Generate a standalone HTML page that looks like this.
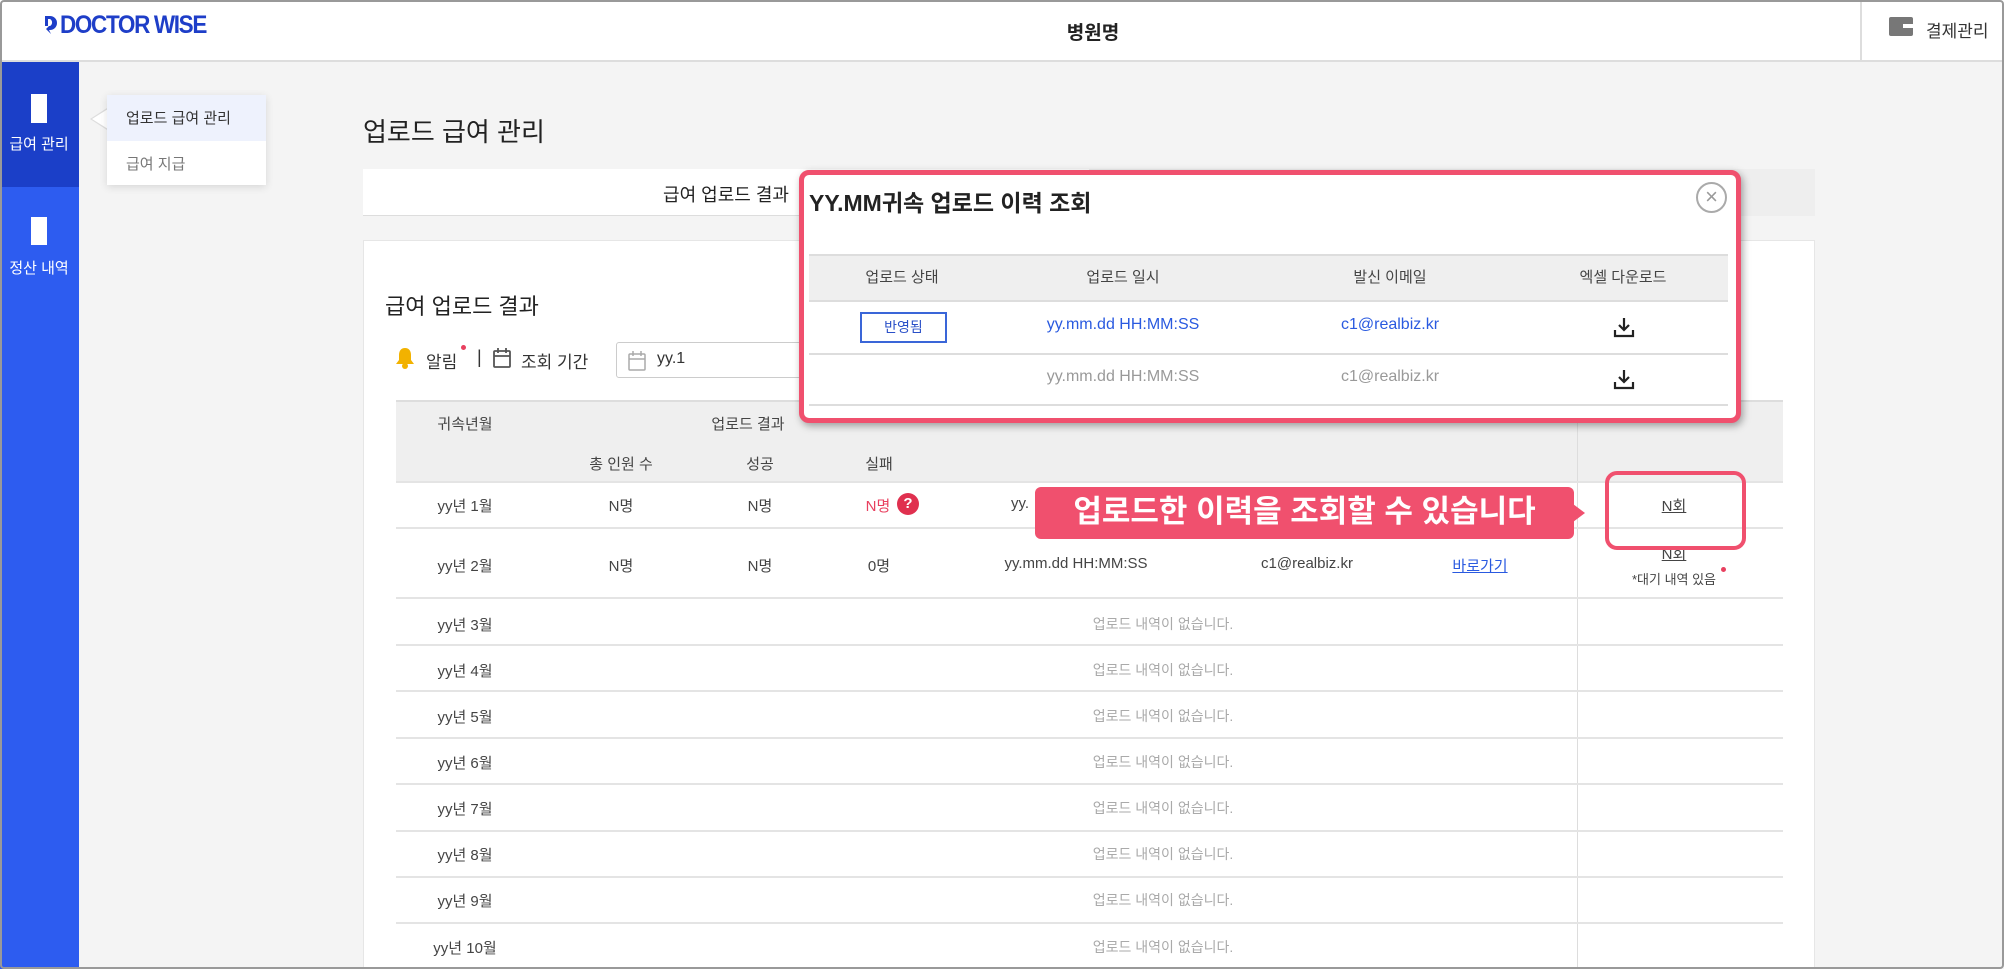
<!DOCTYPE html>
<html><head><meta charset="utf-8"><style>
*{margin:0;padding:0;box-sizing:border-box}
body{width:2004px;height:969px;overflow:hidden;background:#f4f4f4;font-family:"Liberation Sans","Noto Sans CJK KR",sans-serif;color:#333;position:relative}
.a{position:absolute}
.c{position:absolute;transform:translateX(-50%);white-space:nowrap}
.t{font-size:15px;color:#444}
.g{color:#aaa}
.hl{position:absolute;left:396px;width:1387px;height:2px;background:#e4e4e4}
</style></head><body>
<div class="a" style="left:0;top:0;width:2004px;height:969px;border:2px solid #999;border-radius:4px;z-index:50;pointer-events:none"></div>
<!-- header -->
<div class="a" style="left:0;top:0;width:2004px;height:62px;background:#fff;border-bottom:2px solid #ddd"></div>
<svg class="a" style="left:43px;top:14px" width="16" height="22" viewBox="0 0 16 22"><path d="M2 2h5a7 7 0 0 1 0 14h-1l2 4-5-5 3-3h1a4 4 0 0 0 0-7H5v7H2z" fill="#1e3ec8"/></svg>
<div class="a" style="left:60px;top:11px;font-size:25px;font-weight:bold;color:#1e3ec8;letter-spacing:-1.5px;transform:scaleX(.9);transform-origin:left">DOCTOR WISE</div>
<div class="c" style="left:1093px;top:18px;font-size:19px;font-weight:bold;color:#222">병원명</div>
<div class="a" style="left:1860px;top:0;width:2px;height:62px;background:#ddd"></div>
<div class="a" style="left:1889px;top:17px;width:24px;height:19px;background:#777;border-radius:2px"></div>
<div class="a" style="left:1903px;top:24px;width:10px;height:4px;background:#fff"></div>
<div class="a" style="left:1926px;top:17px;font-size:17px;color:#333">결제관리</div>
<!-- sidebar -->
<div class="a" style="left:0;top:62px;width:79px;height:907px;background:#2d5cf0"></div>
<div class="a" style="left:0;top:62px;width:79px;height:125px;background:#1b3fc8"></div>
<div class="a" style="left:31px;top:94px;width:16px;height:29px;background:#fff"></div>
<div class="c" style="left:39px;top:133px;font-size:15px;color:#fff">급여 관리</div>
<div class="a" style="left:31px;top:217px;width:16px;height:28px;background:#fff"></div>
<div class="c" style="left:39px;top:257px;font-size:15px;color:#fff">정산 내역</div>
<!-- submenu -->
<div class="a" style="left:90px;top:108px;width:0;height:0;border-top:11px solid transparent;border-bottom:11px solid transparent;border-right:17px solid #ddd"></div>
<div class="a" style="left:92px;top:109px;width:0;height:0;border-top:10px solid transparent;border-bottom:10px solid transparent;border-right:16px solid #fff"></div>
<div class="a" style="left:107px;top:95px;width:159px;height:90px;background:#fff;box-shadow:0 2px 8px rgba(0,0,0,.12)"></div>
<div class="a" style="left:107px;top:95px;width:159px;height:46px;background:#eef2fd"></div>
<div class="a" style="left:126px;top:107px;font-size:15px;color:#333">업로드 급여 관리</div>
<div class="a" style="left:126px;top:153px;font-size:15px;color:#777">급여 지급</div>
<!-- main -->
<div class="a" style="left:363px;top:112px;font-size:26px;color:#222">업로드 급여 관리</div>
<div class="a" style="left:363px;top:169px;width:1452px;height:47px;background:#fff;border-bottom:1px solid #ddd"></div>
<div class="a" style="left:1089px;top:169px;width:726px;height:47px;background:#eee"></div>
<div class="c" style="left:726px;top:181px;font-size:18px;color:#222">급여 업로드 결과</div>
<div class="a" style="left:363px;top:240px;width:1452px;height:729px;background:#fff;border:1px solid #e6e6e6"></div>
<div class="a" style="left:385px;top:289px;font-size:22px;color:#222">급여 업로드 결과</div>
<svg class="a" style="left:395px;top:347px" width="20" height="22" viewBox="0 0 20 22"><path d="M10 1c-4 0-6 3-6 7v5l-3 4h18l-3-4V8c0-4-2-7-6-7z" fill="#f2b200"/><circle cx="10" cy="19" r="3" fill="#f2b200"/></svg>
<div class="a" style="left:426px;top:348px;font-size:17px;color:#333">알림</div>
<div class="a" style="left:461px;top:345px;width:5px;height:5px;background:#e8405f;border-radius:50%"></div>
<div class="a" style="left:477px;top:347px;font-size:18px;color:#333">|</div>
<svg class="a" style="left:492px;top:347px" width="20" height="22" viewBox="0 0 20 22" fill="none" stroke="#555" stroke-width="1.8"><rect x="2" y="4" width="16" height="16" rx="1"/><path d="M2 9h16M6 1v5M14 1v5"/></svg>
<div class="a" style="left:521px;top:348px;font-size:17px;color:#333">조회 기간</div>
<div class="a" style="left:616px;top:342px;width:200px;height:36px;border:1px solid #ccc;border-radius:3px;background:#fff"></div>
<svg class="a" style="left:627px;top:350px" width="20" height="22" viewBox="0 0 20 22" fill="none" stroke="#aaa" stroke-width="1.5"><rect x="2" y="4" width="16" height="16" rx="1"/><path d="M2 9h16M6 1v5M14 1v5"/></svg>
<div class="a" style="left:657px;top:350px;font-size:16px;color:#333">yy.1</div>
<!-- table -->
<div class="a" style="left:396px;top:400px;width:1387px;height:82px;background:#efefef;border-top:2px solid #ddd"></div>
<div class="a" style="left:1577px;top:400px;width:1px;height:569px;background:#ddd"></div>
<div class="c t" style="left:465px;top:413px">귀속년월</div>
<div class="c t" style="left:748px;top:413px">업로드 결과</div>
<div class="c t" style="left:621px;top:453px">총 인원 수</div>
<div class="c t" style="left:760px;top:453px">성공</div>
<div class="c t" style="left:879px;top:453px">실패</div>
<div class="hl" style="top:481px"></div>
<div class="c t" style="left:465px;top:495px">yy년 1월</div>
<div class="c t" style="left:621px;top:495px">N명</div>
<div class="c t" style="left:760px;top:495px">N명</div>
<div class="c t" style="left:878px;top:495px;color:#e8405f">N명</div>
<div class="a" style="left:897px;top:493px;width:22px;height:22px;border-radius:50%;background:#e0304f;color:#fff;font-size:15px;font-weight:bold;text-align:center;line-height:22px">?</div>
<div class="a t" style="left:1011px;top:495px">yy.</div>
<div class="hl" style="top:527px"></div>
<div class="c t" style="left:465px;top:555px">yy년 2월</div>
<div class="c t" style="left:621px;top:555px">N명</div>
<div class="c t" style="left:760px;top:555px">N명</div>
<div class="c t" style="left:879px;top:555px">0명</div>
<div class="c t" style="left:1076px;top:555px">yy.mm.dd HH:MM:SS</div>
<div class="c t" style="left:1307px;top:555px">c1@realbiz.kr</div>
<div class="c t" style="left:1480px;top:555px;color:#2a5ae0;text-decoration:underline">바로가기</div>
<div class="c t" style="left:1674px;top:543px;text-decoration:underline">N회</div>
<div class="c" style="left:1674px;top:569px;font-size:13px;color:#444">*대기 내역 있음</div>
<div class="a" style="left:1721px;top:567px;width:5px;height:5px;background:#e8405f;border-radius:50%"></div>
<div class="hl" style="top:597px"></div>
<div class="c t" style="left:465px;top:614px">yy년 3월</div><div class="c t g" style="left:1163px;top:614px;font-size:14px">업로드 내역이 없습니다.</div>
<div class="hl" style="top:644px"></div>
<div class="c t" style="left:465px;top:660px">yy년 4월</div><div class="c t g" style="left:1163px;top:660px;font-size:14px">업로드 내역이 없습니다.</div>
<div class="hl" style="top:690px"></div>
<div class="c t" style="left:465px;top:706px">yy년 5월</div><div class="c t g" style="left:1163px;top:706px;font-size:14px">업로드 내역이 없습니다.</div>
<div class="hl" style="top:737px"></div>
<div class="c t" style="left:465px;top:752px">yy년 6월</div><div class="c t g" style="left:1163px;top:752px;font-size:14px">업로드 내역이 없습니다.</div>
<div class="hl" style="top:783px"></div>
<div class="c t" style="left:465px;top:798px">yy년 7월</div><div class="c t g" style="left:1163px;top:798px;font-size:14px">업로드 내역이 없습니다.</div>
<div class="hl" style="top:830px"></div>
<div class="c t" style="left:465px;top:844px">yy년 8월</div><div class="c t g" style="left:1163px;top:844px;font-size:14px">업로드 내역이 없습니다.</div>
<div class="hl" style="top:876px"></div>
<div class="c t" style="left:465px;top:890px">yy년 9월</div><div class="c t g" style="left:1163px;top:890px;font-size:14px">업로드 내역이 없습니다.</div>
<div class="hl" style="top:922px"></div>
<div class="c t" style="left:465px;top:937px">yy년 10월</div><div class="c t g" style="left:1163px;top:937px;font-size:14px">업로드 내역이 없습니다.</div>
<!-- modal -->
<div class="a" style="left:799px;top:170px;width:942px;height:253px;background:#fff;border:5px solid #f0506e;border-radius:10px;box-shadow:2px 3px 8px rgba(0,0,0,.35)"></div>
<div class="a" style="left:809px;top:184px;font-size:23px;color:#222;font-weight:bold">YY.MM귀속 업로드 이력 조회</div>
<div class="a" style="left:1696px;top:182px;width:31px;height:31px;border:2px solid #aaa;border-radius:50%;color:#999;font-size:22px;text-align:center;line-height:26px">×</div>
<div class="a" style="left:809px;top:254px;width:919px;height:48px;background:#efefef;border-top:2px solid #ddd;border-bottom:2px solid #ddd"></div>
<div class="c t" style="left:902px;top:266px">업로드 상태</div>
<div class="c t" style="left:1123px;top:266px">업로드 일시</div>
<div class="c t" style="left:1390px;top:266px">발신 이메일</div>
<div class="c t" style="left:1623px;top:266px">엑셀 다운로드</div>
<div class="a" style="left:860px;top:312px;width:87px;height:31px;border:2px solid #3a66d8;text-align:center;font-size:14px;line-height:27px;color:#2a50c8">반영됨</div>
<div class="c" style="left:1123px;top:316px;font-size:16px;color:#2a5ae0">yy.mm.dd HH:MM:SS</div>
<div class="c" style="left:1390px;top:316px;font-size:16px;color:#2a5ae0">c1@realbiz.kr</div>
<svg class="a" style="left:1612px;top:315px" width="24" height="24" viewBox="0 0 24 24" fill="none" stroke="#222" stroke-width="2.2"><path d="M12 3v12M7 10l5 5 5-5M3 15v6h18v-6"/></svg>
<div class="a" style="left:809px;top:353px;width:919px;height:2px;background:#ddd"></div>
<div class="c" style="left:1123px;top:368px;font-size:16px;color:#999">yy.mm.dd HH:MM:SS</div>
<div class="c" style="left:1390px;top:368px;font-size:16px;color:#999">c1@realbiz.kr</div>
<svg class="a" style="left:1612px;top:367px" width="24" height="24" viewBox="0 0 24 24" fill="none" stroke="#222" stroke-width="2.2"><path d="M12 3v12M7 10l5 5 5-5M3 15v6h18v-6"/></svg>
<div class="a" style="left:809px;top:404px;width:919px;height:2px;background:#ddd"></div>
<!-- tooltip -->
<div class="a" style="left:1035px;top:487px;width:539px;height:52px;background:#f0506e;border-radius:6px;color:#fff;font-size:31px;font-weight:bold;text-align:center;line-height:50px;white-space:nowrap">업로드한 이력을 조회할 수 있습니다</div>
<div class="a" style="left:1573px;top:504px;width:0;height:0;border-top:9px solid transparent;border-bottom:9px solid transparent;border-left:12px solid #f0506e"></div>
<div class="a" style="left:1605px;top:471px;width:141px;height:79px;border:4px solid #f0506e;border-radius:12px"></div>
<div class="c t" style="left:1674px;top:495px;text-decoration:underline">N회</div>
</body></html>
